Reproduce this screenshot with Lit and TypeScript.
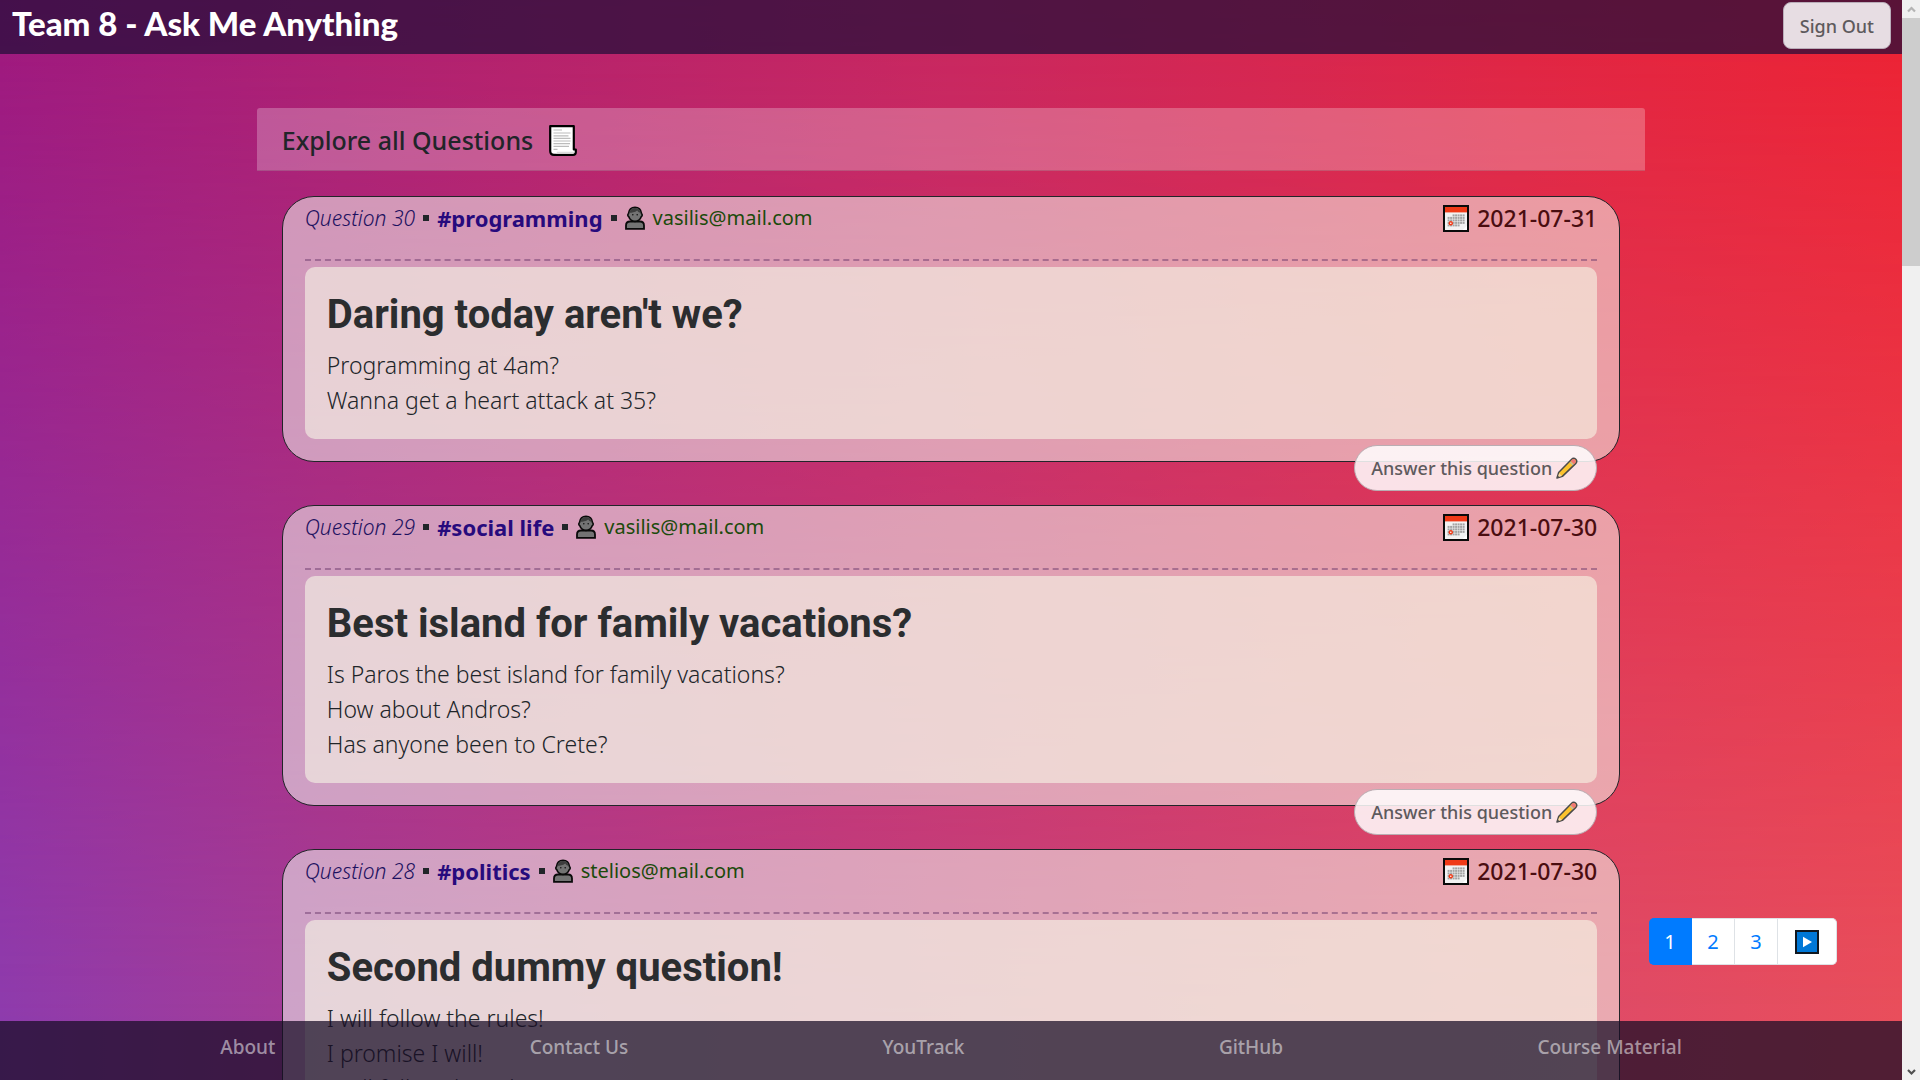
import { LitElement, html, css, svg } from "lit";
import { customElement, property, state } from "lit/decorators.js";

interface Question {
  id: number;
  topic: string;
  author: string;
  date: string;
  title: string;
  lines: string[];
}

const QUESTIONS: Question[] = [
  {
    id: 30,
    topic: "programming",
    author: "vasilis@mail.com",
    date: "2021-07-31",
    title: "Daring today aren't we?",
    lines: ["Programming at 4am?", "Wanna get a heart attack at 35?"],
  },
  {
    id: 29,
    topic: "social life",
    author: "vasilis@mail.com",
    date: "2021-07-30",
    title: "Best island for family vacations?",
    lines: [
      "Is Paros the best island for family vacations?",
      "How about Andros?",
      "Has anyone been to Crete?",
    ],
  },
  {
    id: 28,
    topic: "politics",
    author: "stelios@mail.com",
    date: "2021-07-30",
    title: "Second dummy question!",
    lines: ["I will follow the rules!", "I promise I will!", "I will follow the rules!"],
  },
];

const dots = (() => {
  const cells = [];
  for (let row = 0; row < 5; row++) {
    for (let col = 0; col < 7; col++) {
      if ((row === 0 && col < 2) || (row === 4 && col > 4)) continue;
      cells.push(svg`<rect x=${4.6 + col * 2.5} y=${9.4 + row * 2.5} width="2" height="2" fill="#a3a3a3"/>`);
    }
  }
  return cells;
})();

const scrollIcon = html`<svg class="icon-scroll" viewBox="0 0 28 31" aria-hidden="true">
  <path d="M1.2 1.2H24.8V24.500H26.800V27Q26.800 29.800 24 29.800H5Q1.200 29.800 1.200 26Z" fill="#fff" stroke="#000" stroke-width="2.200" stroke-linejoin="round"/>
  <path d="M8 26.800H25.600Q25.400 28.700 23.800 28.700H6.200Q8 28.400 8 26.800Z" fill="#dcdcdc"/>
  <path d="M4.500 5H13M4.500 8H21.500M4.500 10.800H19.500M4.500 13.400H21.500M4.500 16H21.500M4.500 18.600H21M4.500 21.400H20M4.500 24.400H8.500" stroke="#bcbcbc" stroke-width="1.200" fill="none"/>
</svg>`;

const userIcon = html`<svg class="icon-user" viewBox="0 0 20 24" aria-hidden="true">
  <path d="M1 22.800V19.500Q1 15.500 5 15.500H15Q19 15.500 19 19.500V22.800Z" fill="#737373" stroke="#0a0a0a" stroke-width="1.800"/>
  <path d="M10 1.200C14 1.200 16 3.600 16.400 7.200C17.600 8.400 17.400 10.200 16.200 10.800C15.400 13.200 13 15.400 10 15.400S4.600 13.200 3.800 10.800C2.600 10.200 2.400 8.400 3.600 7.200C4 3.600 6 1.200 10 1.200Z" fill="#737373" stroke="#0a0a0a" stroke-width="1.600"/>
  <path d="M4.400 6.800C4.900 3.600 6.800 2 10 2S15 3.800 15.600 6.800C13.800 6.600 12.800 5.800 12.200 4.600C9.800 6.600 7 6.800 4.400 6.800Z" fill="#3d3d3d"/>
  <circle cx="7.800" cy="8.800" r=".8" fill="#111"/><circle cx="12.200" cy="8.800" r=".8" fill="#111"/>
</svg>`;

const calendarIcon = html`<svg class="icon-calendar" viewBox="0 0 26 27" aria-hidden="true">
  <rect x="1" y="1" width="24" height="25" fill="#f2f2f2" stroke="#0a0a0a" stroke-width="2"/>
  <rect x="2" y="2" width="22" height="5.400" fill="#f03a17"/>
  ${dots}
  <circle cx="7.800" cy="18.200" r="2.200" fill="#f03a17"/><circle cx="7.800" cy="18.200" r=".8" fill="#fff"/>
  <path d="M24 20.500V25H19.500Z" fill="#fff"/>
</svg>`;

const pencilIcon = html`<svg class="icon-pencil" viewBox="0 0 22 22" aria-hidden="true">
  <path d="M1 21L2.600 15.600L15.400 2.400Q17.600 .2 19.800 2.200Q21.800 4.400 19.600 6.600L6.400 19.400Z" fill="#fcc22d" stroke="#4b4b4b" stroke-width="1.500" stroke-linejoin="round"/>
  <path d="M15.800 3Q17.600 1.200 19.200 2.800Q20.800 4.400 19 6.200L18 7.200L14.800 4Z" fill="#f0767a"/>
  <path d="M14 4.800L17.200 8" stroke="#b9b9b9" stroke-width="1.200"/>
  <path d="M1.800 20.200L3.200 16.200L5.800 18.900Z" fill="#f3d9b0"/>
  <path d="M1 21L1.800 18.600L3.400 20.200Z" fill="#4b4b4b"/>
</svg>`;

const playIcon = html`<svg class="icon-play" viewBox="0 0 24 24" aria-hidden="true">
  <rect x="1" y="1" width="22" height="22" fill="#0078d7" stroke="#101820" stroke-width="2"/>
  <path d="M8 6.800V17.200L17 12Z" fill="#fff"/>
</svg>`;

@customElement("question-card")
class QuestionCard extends LitElement {
  @property({ attribute: false }) question!: Question;

  static styles = css`
    :host {
      display: block;
    }
    .card {
      border: 1px solid #212529;
      border-radius: 32px;
      background: rgba(243, 255, 244, 0.53);
      padding: 3px 22px 22px;
      color: #212529;
    }
    .meta {
      display: flex;
      align-items: center;
      justify-content: space-between;
      height: 36px;
      margin-bottom: 23px;
      line-height: 36px;
    }
    .group {
      display: flex;
      align-items: center;
      gap: 8px;
    }
    .number {
      font-size: 21px;
      font-style: italic;
      font-weight: 300;
      color: #1d1160;
    }
    .bullet {
      width: 6px;
      height: 6px;
      background: #212529;
    }
    .topic {
      font-size: 22px;
      font-weight: 700;
      color: #270a7d;
    }
    .author {
      font-size: 20px;
      color: #1b4a0b;
    }
    .date {
      font-size: 23px;
      font-weight: 500;
      color: #4a0d10;
    }
    .icon-user {
      width: 20px;
      height: 24px;
    }
    .icon-calendar {
      width: 26px;
      height: 27px;
    }
    .icon-pencil {
      width: 22px;
      height: 22px;
    }
    .rule {
      border: 0;
      border-top: 2px dashed rgba(110, 60, 110, 0.5);
      margin: 0 0 6px;
    }
    .body {
      border-radius: 10px;
      background: rgba(247, 247, 230, 0.6);
      padding: 23px 22px 21px;
    }
    h2 {
      margin: 0 0 8px;
      font-family: "Franklin Gothic Medium", Roboto, sans-serif;
      font-size: 40px;
      font-weight: 700;
      line-height: 50px;
      color: #2b2d2f;
    }
    p {
      margin: 0;
      font-size: 23px;
      font-weight: 350;
      line-height: 35px;
    }
    .actions {
      display: flex;
      justify-content: flex-end;
      margin: -17px 23px 14px;
    }
    .answer {
      display: flex;
      align-items: center;
      gap: 4px;
      box-sizing: border-box;
      height: 46px;
      padding: 0 18px 0 16px;
      border: 1px solid #b9adb2;
      border-radius: 23px;
      background: rgba(255, 255, 255, 0.86);
      font: 500 18px "Segoe UI", "Noto Sans", sans-serif;
      color: #5e5a5d;
      position: relative;
    }
  `;

  render() {
    const q = this.question;
    return html`
      <article class="card">
        <header class="meta">
          <div class="group">
            <span class="number">Question ${q.id}</span>
            <span class="bullet"></span>
            <span class="topic">#${q.topic}</span>
            <span class="bullet"></span>
            ${userIcon}
            <span class="author">${q.author}</span>
          </div>
          <div class="group">
            ${calendarIcon}
            <time class="date">${q.date}</time>
          </div>
        </header>
        <hr class="rule" />
        <div class="body">
          <h2>${q.title}</h2>
          ${q.lines.map((line) => html`<p>${line}</p>`)}
        </div>
      </article>
      <div class="actions">
        <button class="answer" type="button">Answer this question${pencilIcon}</button>
      </div>
    `;
  }
}

@customElement("app-root")
class AppRoot extends LitElement {
  @state() private page = 1;

  static styles = css`
    :host {
      display: grid;
      grid-template-columns: 1fr 18px;
      height: 100vh;
      overflow: hidden;
      font-family: "Segoe UI", "Noto Sans", sans-serif;
    }
    .view {
      position: relative;
      isolation: isolate;
      overflow: hidden;
      min-width: 0;
      background: linear-gradient(90deg, #8e3cae, #a63d96 17%, #c23f80 45%, #dc4a6c 78%, #e94f5c);
    }
    .glow {
      position: absolute;
      inset: 0;
      z-index: -1;
      background: linear-gradient(90deg, #a0187c, #ae1f70 18%, #c9265e 50%, #e02442 80%, #ec2133);
      mask-image: linear-gradient(#000, transparent 95%);
    }
    .top {
      display: flex;
      justify-content: space-between;
      align-items: flex-start;
      box-sizing: border-box;
      height: 54px;
      padding: 2px 11px 0 12px;
      background: rgba(34, 14, 57, 0.73);
    }
    .brand {
      font-family: "Gill Sans MT", Lato, sans-serif;
      font-size: 33px;
      font-weight: 900;
      line-height: 42px;
      color: #fff;
      text-decoration: none;
    }
    .sign-out {
      box-sizing: border-box;
      height: 47px;
      padding: 0 16px;
      border: 1px solid #b9adb9;
      border-radius: 8px;
      background: rgba(255, 255, 255, 0.86);
      font: 500 18px "Segoe UI", "Noto Sans", sans-serif;
      color: #5e5a5d;
    }
    .content {
      width: 73%;
      margin: 54px auto 0;
    }
    .heading {
      box-sizing: border-box;
      display: flex;
      align-items: center;
      gap: 16px;
      height: 63px;
      padding: 2px 25px 0;
      border-bottom: 1px solid rgba(0, 0, 0, 0.12);
      border-radius: 3px 3px 0 0;
      background: rgba(255, 255, 255, 0.25);
      color: #212529;
    }
    h1 {
      margin: 0;
      font-size: 25px;
      font-weight: 500;
    }
    .icon-scroll {
      width: 28px;
      height: 31px;
    }
    .list {
      padding: 25px;
    }
    .pages {
      position: absolute;
      right: 65px;
      top: 85%;
      display: flex;
    }
    .page {
      display: flex;
      align-items: center;
      justify-content: center;
      box-sizing: border-box;
      height: 47px;
      min-width: 43px;
      padding: 0 15px;
      border: 1px solid #dee2e6;
      border-left-width: 0;
      background: #fff;
      font: 20px "Segoe UI", "Noto Sans", sans-serif;
      color: #007bff;
    }
    .page.current {
      border-color: #007bff;
      background: #007bff;
      color: #fff;
    }
    .page:first-child {
      border-radius: 5px 0 0 5px;
    }
    .page:last-child {
      border-radius: 0 5px 5px 0;
      padding: 0 17px;
    }
    .icon-play {
      width: 24px;
      height: 24px;
    }
    .bottom {
      position: absolute;
      left: 0;
      right: 0;
      bottom: 0;
      display: flex;
      justify-content: space-around;
      box-sizing: border-box;
      height: 59px;
      padding: 10px 93px 0;
      background: rgba(23, 12, 37, 0.73);
    }
    .bottom a {
      font-size: 19px;
      font-weight: 500;
      line-height: 32px;
      color: rgba(255, 255, 255, 0.52);
      text-decoration: none;
    }
    .scrollbar {
      display: grid;
      grid-template-rows: 18px 248px 1fr 18px;
      justify-items: stretch;
      background: #f0f0f0;
    }
    .thumb {
      background: #cdcdcd;
    }
    .arrow {
      width: 18px;
      height: 18px;
    }
    .down {
      grid-row: 4;
    }
  `;

  render() {
    return html`
      <div class="view">
        <div class="glow"></div>
        <nav class="top">
          <a class="brand" href="#">Team 8 - Ask Me Anything</a>
          <button class="sign-out" type="button">Sign Out</button>
        </nav>
        <main class="content">
          <header class="heading">
            <h1>Explore all Questions</h1>
            ${scrollIcon}
          </header>
          <div class="list">
            ${QUESTIONS.map((q) => html`<question-card .question=${q}></question-card>`)}
          </div>
        </main>
        <nav class="pages" aria-label="Pages">
          ${[1, 2, 3].map(
            (n) => html`<button
              type="button"
              class="page ${n === this.page ? "current" : ""}"
              @click=${() => (this.page = n)}
            >${n}</button>`
          )}
          <button
            type="button"
            class="page"
            aria-label="Next page"
            @click=${() => (this.page = Math.min(3, this.page + 1))}
          >${playIcon}</button>
        </nav>
        <footer class="bottom">
          <a href="#about">About</a>
          <a href="#contact">Contact Us</a>
          <a href="#youtrack">YouTrack</a>
          <a href="#github">GitHub</a>
          <a href="#material">Course Material</a>
        </footer>
      </div>
      <div class="scrollbar" aria-hidden="true">
        <svg class="arrow" viewBox="0 0 18 18"><path d="M6 11.500L9.500 8L13 11.500" fill="none" stroke="#b4b4b4" stroke-width="2.200"/></svg>
        <div class="thumb"></div>
        <svg class="arrow down" viewBox="0 0 18 18"><path d="M6 8L9.500 11.500L13 8" fill="none" stroke="#505050" stroke-width="2.200"/></svg>
      </div>
    `;
  }
}
